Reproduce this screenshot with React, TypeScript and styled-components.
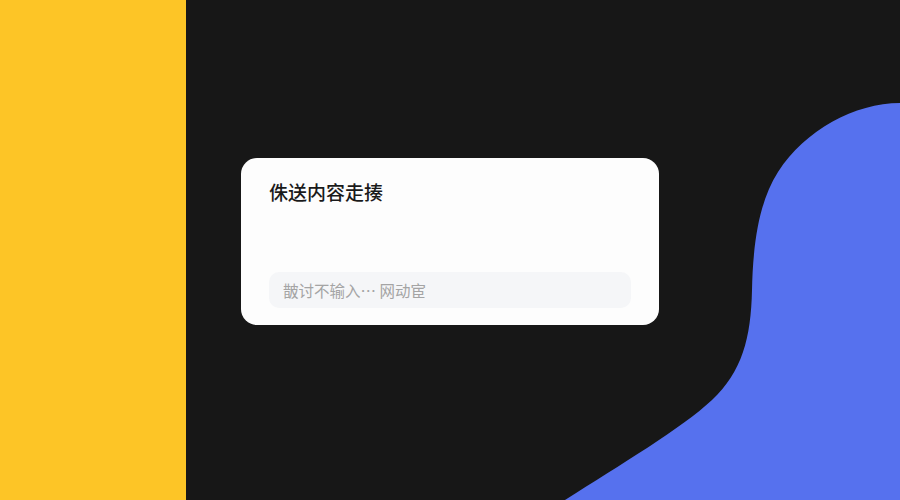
import styled, { createGlobalStyle } from "styled-components";

const GlobalStyle = createGlobalStyle`
  html, body {
    margin: 0;
    padding: 0;
  }
  body {
    font-family: "Noto Sans CJK SC", "Noto Sans", sans-serif;
  }
`;

function App() {
  return (
    <>
      <GlobalStyle />
      <Stage>
        <Blob viewBox="0 0 900 500" preserveAspectRatio="none" aria-hidden>
          <path
            d="M900,103 C855,103 805,130 778,172 C760,200 753,240 752,290 C751,338 742,372 712,400 C682,428 620,465 565,500 L900,500 Z"
            fill="#5671EE"
          />
        </Blob>
        <Card>
          <Title>侏送内容走揍</Title>
          <Field placeholder="皵讨不输入⋯ 网动宦" />
        </Card>
      </Stage>
    </>
  );
}

export default App;

const Stage = styled.div`
  position: relative;
  width: 900px;
  height: 500px;
  overflow: hidden;
  display: flex;
  align-items: center;
  justify-content: center;
  padding-bottom: 17px;
  box-sizing: border-box;
  background: linear-gradient(to right, #fdc526 186px, #171717 186px);
`;

const Blob = styled.svg`
  position: absolute;
  inset: 0;
  width: 100%;
  height: 100%;
`;

const Card = styled.div`
  position: relative;
  width: 418px;
  height: 167px;
  box-sizing: border-box;
  padding: 20px 28px 17px 28px;
  display: flex;
  flex-direction: column;
  justify-content: space-between;
  background: #fdfdfd;
  border-radius: 16px;
`;

const Title = styled.h2`
  margin: 0;
  font-size: 19px;
  line-height: 28px;
  font-weight: 500;
  color: #1a1a1a;
`;

const Field = styled.input`
  height: 36px;
  width: 100%;
  box-sizing: border-box;
  border: none;
  outline: none;
  border-radius: 10px;
  padding: 0 14px;
  background: #f5f6f8;
  font-family: "Noto Sans CJK SC", "Noto Sans", sans-serif;
  font-size: 15.5px;
  color: #333;
  &::placeholder {
    color: #a4a4a4;
  }
`;
